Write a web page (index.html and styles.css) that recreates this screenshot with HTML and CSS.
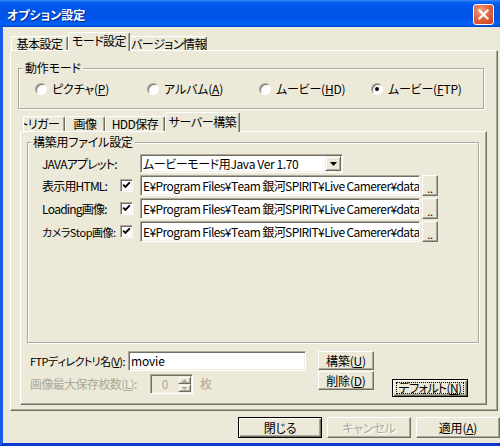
FILE: index.html
```html
<!DOCTYPE html>
<html lang="ja">
<head>
<meta charset="utf-8">
<title>オプション設定</title>
<link rel="stylesheet" href="styles.css">
</head>
<body>
<div class="window">
  <div class="titlebar">
    <span class="title">オプション設定</span>
    <span class="close"><svg width="13" height="13" viewBox="0 0 13 13"><path d="M2.5 2.5 L10.5 10.5 M10.5 2.5 L2.5 10.5" stroke="#fff" stroke-width="2.2" stroke-linecap="square"/></svg></span>
  </div>
  <div class="frame">
    <div class="client">
      <div class="tabctl outer">
        <div class="tabrow outer-tabs">
          <div class="tab t-basic">基本設定</div>
          <div class="tab sel t-mode">モード設定</div>
          <div class="tab t-ver">バージョン情報</div>
        </div>
        <div class="panel outer-panel">
          <fieldset class="group mode-group">
            <legend>動作モード</legend>
            <div class="radios">
              <label class="radio"><span class="rb"></span><span>ピクチャ(<u>P</u>)</span></label>
              <label class="radio"><span class="rb"></span><span>アルバム(<u>A</u>)</span></label>
              <label class="radio"><span class="rb"></span><span>ムービー(<u>H</u>D)</span></label>
              <label class="radio"><span class="rb on"></span><span>ムービー(<u>F</u>TP)</span></label>
            </div>
          </fieldset>

          <div class="tabctl inner">
            <div class="tabrow inner-tabs">
              <div class="tab clip t-trig"><span class="clip-text">トリガー</span></div>
              <div class="tab t-img">画像</div>
              <div class="tab t-hdd">HDD保存</div>
              <div class="tab sel t-srv">サーバー構築</div>
            </div>
            <div class="panel inner-panel">
              <fieldset class="group files-group">
                <legend>構築用ファイル設定</legend>
                <div class="form">
                  <span class="lbl">JAVAアプレット:</span>
                  <div class="combo">
                    <span class="combo-text">ムービーモード用Java Ver 1.70</span>
                    <span class="dd"><svg width="7" height="4" viewBox="0 0 7 4"><path d="M0 0 H7 L3.5 4 Z" fill="#000"/></svg></span>
                  </div>

                  <span class="lbl">表示用HTML:</span>
                  <span class="cb"><svg width="9" height="9" viewBox="0 0 9 9"><path d="M1.2 3.6 L3.4 5.8 L7.8 1.4" fill="none" stroke="#000" stroke-width="1.9"/></svg></span>
                  <div class="tb path">E¥Program Files¥Team 銀河SPIRIT¥Live Camerer¥data</div>
                  <span class="btn browse">..</span>

                  <span class="lbl">Loading画像:</span>
                  <span class="cb"><svg width="9" height="9" viewBox="0 0 9 9"><path d="M1.2 3.6 L3.4 5.8 L7.8 1.4" fill="none" stroke="#000" stroke-width="1.9"/></svg></span>
                  <div class="tb path">E¥Program Files¥Team 銀河SPIRIT¥Live Camerer¥data</div>
                  <span class="btn browse">..</span>

                  <span class="lbl narrow">カメラStop画像:</span>
                  <span class="cb"><svg width="9" height="9" viewBox="0 0 9 9"><path d="M1.2 3.6 L3.4 5.8 L7.8 1.4" fill="none" stroke="#000" stroke-width="1.9"/></svg></span>
                  <div class="tb path">E¥Program Files¥Team 銀河SPIRIT¥Live Camerer¥data</div>
                  <span class="btn browse">..</span>
                </div>
              </fieldset>

              <div class="bottom">
                <div class="bcol">
                  <div class="brow">
                    <span class="lbl-ftp">FTPディレクトリ名(<u>V</u>):</span>
                    <div class="tb ftp">movie</div>
                  </div>
                  <div class="brow disabled">
                    <span class="lbl-max">画像最大保存枚数(<u>L</u>):</span>
                    <div class="spin">
                      <span class="spin-val">0</span>
                      <span class="spin-btns">
                        <span class="sb"><svg width="5" height="3" viewBox="0 0 5 3"><path d="M2.5 0 L5 3 H0 Z" fill="#ACA899"/></svg></span>
                        <span class="sb"><svg width="5" height="3" viewBox="0 0 5 3"><path d="M0 0 H5 L2.5 3 Z" fill="#ACA899"/></svg></span>
                      </span>
                    </div>
                    <span class="mai">枚</span>
                  </div>
                </div>
                <div class="mid">
                  <span class="btn small">構築(<u>U</u>)</span>
                  <span class="btn small">削除(<u>D</u>)</span>
                </div>
                <span class="btn default dflt"><span class="focus">デフォルト(<u>N</u>)</span></span>
              </div>
            </div>
          </div>
        </div>
      </div>

      <div class="actions">
        <span class="btn default act">閉じる</span>
        <span class="btn act off">キャンセル</span>
        <span class="btn act">適用(<u>A</u>)</span>
      </div>
    </div>
  </div>
</div>
</body>
</html>
```

FILE: styles.css
```css
* { box-sizing: border-box; }
html, body { margin: 0; padding: 0; }
body {
  width: 500px;
  height: 446px;
  overflow: hidden;
  background: #ECE9D8;
  font-family: "Noto Sans CJK JP", "Liberation Sans", sans-serif;
  font-size: 12px;
  line-height: 14px;
  color: #000;
  font-feature-settings: "palt";
  font-kerning: none;
  text-autospace: no-autospace;
  text-spacing-trim: space-all;
  letter-spacing: -0.2px;
}
u { text-decoration: underline; }

.window {
  width: 500px;
  height: 446px;
  display: flex;
  flex-direction: column;
}

/* Title bar */
.titlebar {
  flex: none;
  height: 27px;
  padding: 2px 6px 0 7px;
  display: flex;
  align-items: center;
  justify-content: space-between;
  background: linear-gradient(to bottom, #3A8DFB 0, #0B64F2 2px, #0058EE 5px, #0053E6 12px, #0055EA 19px, #0062F8 24px, #0050DE 26px, #0043C8 27px);
}
.title {
  color: #fff;
  font-weight: bold;
  font-size: 12px;
  letter-spacing: 0;
  text-shadow: 1px 1px 0 #0B2491;
}
.close {
  width: 21px;
  height: 21px;
  border: 1px solid #fff;
  border-radius: 3px;
  background: radial-gradient(circle at 35% 30%, #F0A58C 0, #E2653F 45%, #C8401C 100%);
  display: flex;
  align-items: center;
  justify-content: center;
}

/* Frame */
.frame {
  flex: 1;
  display: flex;
  border-left: 3px solid #1A5CEE;
  border-right: 4px solid #0A2DBE;
  border-bottom: 3px solid #0A3AD2;
}
.client {
  flex: 1;
  background: #ECE9D8;
  padding: 5px 8px 0 7px;
  display: flex;
  flex-direction: column;
}

/* Tabs */
.tabctl { display: flex; flex-direction: column; }
.tabrow { display: flex; align-items: flex-end; }
.outer-tabs { height: 18px; padding-left: 1px; }
.inner-tabs { height: 19px; padding-left: 3px; }
.tab {
  height: 14px;
  border: 1px solid;
  border-bottom: 0;
  border-color: #fff #716F64 transparent #fff;
  border-radius: 2px 2px 0 0;
  box-shadow: inset -1px 0 0 #ACA899;
  display: flex;
  align-items: center;
  justify-content: center;
  white-space: nowrap;
  overflow: hidden;
  letter-spacing: -0.5px;
}
.inner-tabs .tab { height: 15px; }
.tab.sel {
  height: 19px;
  margin-bottom: -1px;
  background: #ECE9D8;
  position: relative;
  z-index: 1;
  padding-bottom: 2px;
}
.inner-tabs .tab.sel { height: 20px; }
.t-basic { width: 57px; }
.t-mode { width: 62px; }
.t-ver { width: 77px; }
.t-trig { width: 42px; }
.t-img { width: 40px; }
.t-hdd { width: 60px; }
.t-srv { width: 75px; }
.tab.clip { justify-content: flex-start; }
.clip-text { margin-left: -5px; }

.panel {
  border: 1px solid;
  border-color: #fff #716F64 #716F64 #fff;
  box-shadow: inset -1px -1px 0 #ACA899;
  background: #ECE9D8;
}
.outer-panel { height: 361px; }
.inner { margin: 3px 10px 0 9px; }
.inner-panel { height: 274px; }

/* Group boxes */
.group {
  margin: 0;
  padding: 0;
  min-width: 0;
  border: 1px solid #ACA899;
  box-shadow: inset 1px 1px 0 #fff, 1px 1px 0 #fff;
}
.group > legend {
  padding: 0 2px;
  line-height: 14px;
  background: #ECE9D8;
}
.mode-group { margin: 10px 13px 0 7px; padding: 6px 0 11px 0; }
.mode-group > legend { margin-left: 4px; }
.files-group { margin: 3px 7px 0 6px; padding: 5px 0 100px 0; }
.files-group > legend { margin-left: 3px; }

/* Radios */
.radios { display: grid; grid-template-columns: repeat(4, 112px); padding-left: 16px; }
.radio { display: flex; align-items: center; gap: 5px; height: 16px; white-space: nowrap; }
.rb {
  flex: none;
  width: 12px;
  height: 12px;
  border-radius: 50%;
  background: #fff;
  border: 1px solid;
  border-color: #ACA899 #fff #fff #ACA899;
  box-shadow: inset 1px 1px 0 #716F64;
  display: flex;
  align-items: center;
  justify-content: center;
}
.rb.on::after {
  content: "";
  width: 4px;
  height: 4px;
  border-radius: 50%;
  background: #000;
}

/* Form */
.form {
  display: grid;
  grid-template-columns: 78px 20px 280px 18px;
  grid-template-rows: 19px 21px 21px 21px;
  row-gap: 2px;
  align-items: center;
  padding-left: 14px;
}
.lbl { grid-column: 1; white-space: nowrap; letter-spacing: -0.8px; }
.lbl.narrow { font-size: 11px; letter-spacing: -0.5px; }
.cb {
  grid-column: 2;
  width: 13px;
  height: 13px;
  background: #fff;
  border: 1px solid;
  border-color: #ACA899 #fff #fff #ACA899;
  box-shadow: inset 1px 1px 0 #716F64, inset -1px -1px 0 #F1EFE2;
  display: flex;
  align-items: center;
  justify-content: center;
}
.tb {
  background: #fff;
  border: 1px solid;
  border-color: #ACA899 #fff #fff #ACA899;
  box-shadow: inset 1px 1px 0 #716F64, inset -1px -1px 0 #F1EFE2;
  padding: 0 1px 0 2px;
  display: flex;
  align-items: center;
  overflow: hidden;
  white-space: nowrap;
}
.tb.path { grid-column: 3; height: 21px; letter-spacing: -0.6px; }
.combo {
  grid-column: 3;
  width: 203px;
  height: 19px;
  background: #fff;
  border: 1px solid;
  border-color: #ACA899 #fff #fff #ACA899;
  box-shadow: inset 1px 1px 0 #716F64, inset -1px -1px 0 #F1EFE2;
  display: flex;
  align-items: center;
  padding: 1px 1px 1px 2px;
}
.combo-text { flex: 1; white-space: nowrap; letter-spacing: -0.4px; }
.dd {
  flex: none;
  width: 16px;
  height: 15px;
  border: 1px solid;
  border-color: #ECE9D8 #716F64 #716F64 #ECE9D8;
  box-shadow: inset 1px 1px 0 #fff, inset -1px -1px 0 #ACA899;
  background: #ECE9D8;
  display: flex;
  align-items: center;
  justify-content: center;
}

/* Buttons */
.btn {
  background: #ECE9D8;
  border: 1px solid;
  border-color: #fff #716F64 #716F64 #fff;
  box-shadow: inset -1px -1px 0 #ACA899;
  display: flex;
  align-items: center;
  justify-content: center;
  white-space: nowrap;
}
.btn.default {
  border-color: #000;
  box-shadow: inset 1px 1px 0 #fff, inset -1px -1px 0 #716F64, inset -2px -2px 0 #ACA899;
}
.btn.off { color: #ACA899; text-shadow: 1px 1px 0 #fff; }
.browse {
  grid-column: 4;
  justify-self: end;
  width: 16px;
  height: 21px;
  align-items: flex-end;
  padding-bottom: 3px;
  line-height: 8px;
  font-size: 11px;
}

/* Bottom area */
.bottom { display: flex; margin: 8px 0 0 9px; }
.bcol { display: flex; flex-direction: column; gap: 3px; width: 276px; }
.brow { display: flex; align-items: center; height: 20px; white-space: nowrap; }
.lbl-ftp { width: 98px; flex: none; font-size: 11px; letter-spacing: -0.6px; }
.tb.ftp { width: 178px; height: 20px; flex: none; }
.disabled { color: #ACA899; }
.lbl-max { width: 120px; flex: none; letter-spacing: -0.6px; }
.spin {
  flex: none;
  width: 43px;
  height: 20px;
  display: flex;
  border: 1px solid;
  border-color: #ACA899 #fff #fff #ACA899;
  box-shadow: inset 1px 1px 0 #716F64, inset -1px -1px 0 #F1EFE2;
  padding: 1px;
}
.spin-val { flex: 1; display: flex; align-items: center; justify-content: center; }
.spin-btns { width: 13px; display: flex; flex-direction: column; }
.sb {
  flex: 1;
  border: 1px solid;
  border-color: #ECE9D8 #716F64 #716F64 #ECE9D8;
  box-shadow: inset 1px 1px 0 #fff, inset -1px -1px 0 #ACA899;
  display: flex;
  align-items: center;
  justify-content: center;
}
.mai { margin-left: 7px; }
.mid { margin-left: 12px; display: flex; flex-direction: column; gap: 1px; }
.btn.small { width: 56px; height: 19px; }
.dflt { margin-left: 18px; margin-top: 28px; width: 76px; height: 18px; align-self: flex-start; padding: 2px 3px; }
.focus {
  flex: 1;
  align-self: stretch;
  border: 1px dotted #000;
  display: flex;
  align-items: center;
  justify-content: center;
  letter-spacing: -0.6px;
}

/* Dialog buttons */
.actions {
  display: flex;
  justify-content: flex-end;
  gap: 5px;
  margin: 6px -2px 0 0;
}
.btn.act { width: 84px; height: 21px; }
```
